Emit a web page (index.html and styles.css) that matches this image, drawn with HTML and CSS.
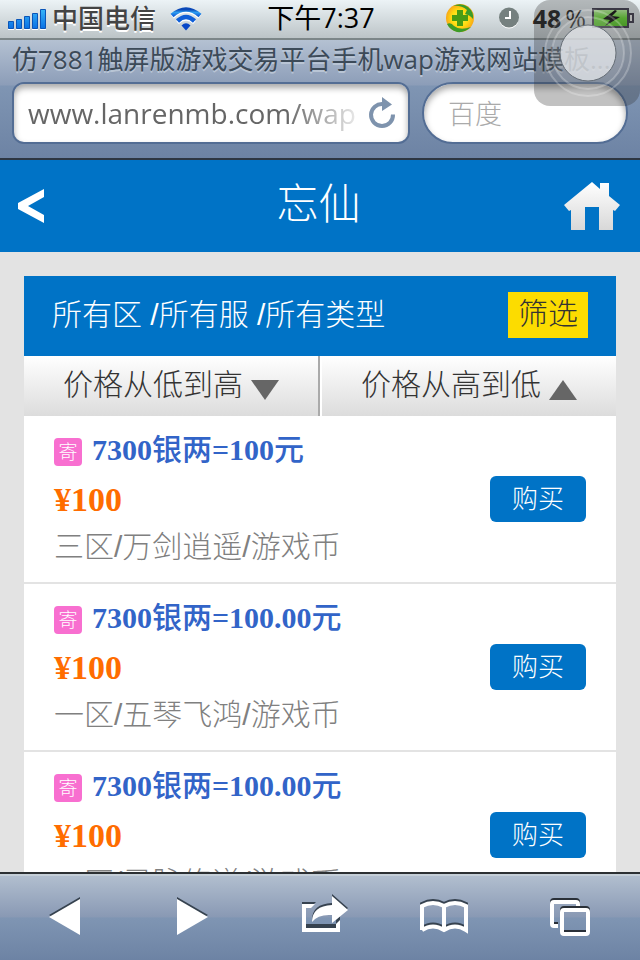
FILE: index.html
```html
<!DOCTYPE html>
<html lang="zh-CN">
<head>
<meta charset="utf-8">
<meta name="viewport" content="width=device-width">
<title>忘仙</title>
<link rel="stylesheet" href="styles.css">
</head>
<body>
<div class="chrome">
  <div class="status">
    <div class="status-side">
      <svg class="signal" width="40" height="24" viewBox="0 0 40 24" aria-hidden="true">
        <defs><linearGradient id="sig" x1="0" y1="0" x2="0" y2="1"><stop offset="0" stop-color="#36b4f8"/><stop offset="1" stop-color="#0a70e4"/></linearGradient></defs>
        <g fill="url(#sig)" stroke="#0a55b8"><path d="M.5 14.500h5v7h-5zM8.500 12.500h5v9h-5zM16.500 9.500h5v12h-5zM24.500 6.500h5v15h-5zM32.500 2.500h5v19h-5z"/></g>
        <path d="M0 22.500h6M8 22.500h6M16 22.500h6M24 22.500h6M32 22.500h6" stroke="#fff"/>
      </svg>
      <span class="carrier">中国电信</span>
      <svg class="wifi" width="32" height="26" viewBox="0 0 32 26" aria-hidden="true">
        <defs><linearGradient id="wf" x1="0" y1="0" x2="0" y2="1"><stop offset="0" stop-color="#0a48b8"/><stop offset=".5" stop-color="#2c9cf0"/><stop offset="1" stop-color="#1468dc"/></linearGradient></defs>
        <path d="M2.500 10Q16-2 29.500 10M7.500 15.500Q16 8 24.500 15.500" fill="none" stroke="#fff" stroke-width="4"/>
        <path d="M2 8.500Q16-3.500 30 8.500" fill="none" stroke="url(#wf)" stroke-width="4.500"/>
        <path d="M7.500 14Q16 6 24.500 14" fill="none" stroke="#0f5fd8" stroke-width="4.500"/>
        <path d="M11.500 18.500Q16 14 20.500 18.500L16 23.500z" fill="#0848c8"/>
      </svg>
    </div>
    <time class="clock">下午7:37</time>
    <div class="status-side status-end">
      <svg width="30" height="32" viewBox="0 0 30 32" aria-hidden="true">
        <defs><radialGradient id="orb"><stop offset="0" stop-color="#fff04a"/><stop offset=".6" stop-color="#ffdc10"/><stop offset="1" stop-color="#f8a818"/></radialGradient></defs>
        <circle cx="15" cy="16" r="14" fill="url(#orb)"/>
        <path d="M8 4Q16 0 23 5Q29 10 28 17Q25 13 20 12L22 8Q16 3 8 4z" fill="#3c9c28"/>
        <path d="M2 22Q6 20 9 24Q15 29 26 25Q20 31 12 30Q5 28 2 22z" fill="#3c9c28"/>
        <path d="M12 8h6v5h5v6h-5v5h-6v-5H7v-6h5z" fill="#4a9c14"/>
      </svg>
      <svg class="alarm" width="20" height="22" viewBox="0 0 20 22" aria-hidden="true">
        <circle cx="10" cy="12" r="9.500" fill="#fff"/><circle cx="10" cy="10.500" r="10" fill="#75807f"/>
        <path d="M11 4v7H6" fill="none" stroke="#fff" stroke-width="2"/>
      </svg>
      <span class="percent">48<span class="sign">%</span></span>
      <svg class="battery" width="42" height="22" viewBox="0 0 42 22" aria-hidden="true">
        <defs><linearGradient id="bat" x1="0" y1="0" x2="0" y2="1"><stop offset="0" stop-color="#c4f8a8"/><stop offset=".5" stop-color="#68d834"/><stop offset="1" stop-color="#50c020"/></linearGradient></defs>
        <path d="M1 2h35v18H1z" fill="url(#bat)" stroke="#3e3c4c" stroke-width="2"/>
        <path d="M37 7h4v8h-4z" fill="#e8e8e8" stroke="#3e3c4c" stroke-width="2"/>
        <path d="M23 3L11 12l7 1-5 6 15-9-8-1 5-5z" fill="#111"/>
      </svg>
    </div>
  </div>
  <div class="page-title">仿7881触屏版游戏交易平台手机wap游戏网站模板...</div>
  <form class="fields">
    <div class="address">
      <input class="url" type="text" aria-label="网址" value="www.lanrenmb.com/wap">
      <button class="reload" type="button" aria-label="刷新">
        <svg width="28" height="32" viewBox="0 0 28 32"><path d="M15 7A11 11 0 1 0 25 17.500" fill="none" stroke="#7e93ad" stroke-width="4"/><path d="M14 0L24 7.500 14 14z" fill="#7e93ad"/></svg>
      </button>
    </div>
    <input class="search" type="search" aria-label="搜索" placeholder="百度">
  </form>
  <button class="assist" type="button" aria-label="辅助触控">
    <svg width="106" height="106" viewBox="0 0 106 106">
      <g stroke="#fff" stroke-opacity=".24" stroke-width="2"><circle cx="54" cy="53" r="43" fill="#fff" fill-opacity=".04"/><circle cx="54" cy="53" r="36" fill="#fff" fill-opacity=".1"/></g>
      <circle cx="54" cy="53" r="28" fill="#e4e6ea" fill-opacity=".76" stroke="#666e76" stroke-width="1"/>
    </svg>
  </button>
</div>

<header class="header">
  <a class="back" href="#" aria-label="返回"><svg width="28" height="34" viewBox="0 0 28 34"><path d="M27 0v8L11 17l16 9v8L1 20v-6z" fill="#fff"/></svg></a>
  <h1>忘仙</h1>
  <a class="home" href="#" aria-label="首页"><svg width="56" height="48" viewBox="0 0 56 48">
    <defs><linearGradient id="hm" x1="0" y1="0" x2="0" y2="1"><stop offset="0" stop-color="#fff"/><stop offset="1" stop-color="#d8d8d8"/></linearGradient></defs>
    <path d="M28 0l8 7V1h9v13l11 9-5 6-2-1v20H35V25H21v23H7V28l-2 1-5-6z" fill="url(#hm)"/></svg></a>
</header>

<main class="content">
  <section class="panel">
    <div class="filter">
      <span>所有区 /所有服 /所有类型</span>
      <button class="filter-btn" type="button">筛选</button>
    </div>
    <div class="sorts">
      <button class="sort" type="button">价格从低到高<svg width="28" height="20" viewBox="0 0 28 20"><path d="M0 0h28L14 20z" fill="#666"/></svg></button>
      <button class="sort" type="button">价格从高到低<svg width="28" height="20" viewBox="0 0 28 20"><path d="M0 20h28L14 0z" fill="#666"/></svg></button>
    </div>
    <ul class="list">
      <li class="item">
        <div class="info">
          <h2><span class="tag">寄</span><a href="#">7300<span class="cn">银两</span>=100<span class="cn">元</span></a></h2>
          <p class="price">¥100</p>
          <p class="area">三区/万剑逍遥/游戏币</p>
        </div>
        <button class="buy" type="button">购买</button>
      </li>
      <li class="item">
        <div class="info">
          <h2><span class="tag">寄</span><a href="#">7300<span class="cn">银两</span>=100.00<span class="cn">元</span></a></h2>
          <p class="price">¥100</p>
          <p class="area">一区/五琴飞鸿/游戏币</p>
        </div>
        <button class="buy" type="button">购买</button>
      </li>
      <li class="item">
        <div class="info">
          <h2><span class="tag">寄</span><a href="#">7300<span class="cn">银两</span>=100.00<span class="cn">元</span></a></h2>
          <p class="price">¥100</p>
          <p class="area">一区/灵脉修道/游戏币</p>
        </div>
        <button class="buy" type="button">购买</button>
      </li>
    </ul>
  </section>
</main>

<nav class="toolbar">
  <button type="button" aria-label="后退"><svg width="50" height="44" viewBox="0 0 50 44"><path d="M41 2v35L10 20z" fill="#36424f"/><path d="M41 4v36L10 22z" fill="#fff"/></svg></button>
  <button type="button" aria-label="前进"><svg width="50" height="44" viewBox="-1 0 50 44"><path d="M10 2v35l31-17z" fill="#36424f"/><path d="M10 4v36l31-18z" fill="#fff"/></svg></button>
  <button type="button" aria-label="分享"><svg width="50" height="44" viewBox="-8 0 50 44">
    <g fill="#36424f"><path d="M2 7h14l-4 4H6v18h30v-4l4-4v12H2z"/><path d="M12 25Q12 9 32 8V-1l16 14-16 14v-8Q18 17 12 25z"/></g>
    <g fill="#fff" transform="translate(0 2)"><path d="M2 7h13l-4 4H6v20h30v-4l4-4v12H2z"/><path d="M12 25Q12 9 32 8V-1l16 14-16 13v-8Q18 17 12 25z"/></g></svg></button>
  <button type="button" aria-label="书签"><svg width="50" height="44" viewBox="0 0 50 44">
    <g fill="none" stroke-width="4"><path d="M3 33V9Q14 3 25 9Q36 3 47 9V33Q36 26 25 33Q14 26 3 33M25 9v24" stroke="#36424f"/><path d="M3 35V11Q14 5 25 11Q36 5 47 11V35Q36 28 25 35Q14 28 3 35M25 11v24" stroke="#fff"/></g></svg></button>
  <button type="button" aria-label="标签页"><svg width="50" height="44" viewBox="0 0 50 44">
    <g fill="none" stroke-width="4"><path d="M13 29H9q-2 0-2-2V7q0-2 2-2h22q2 0 2 2v4" stroke="#2a3038"/><path d="M13 31H9q-2 0-2-2V9q0-2 2-2h22q2 0 2 2v4" stroke="#fff"/><rect x="17" y="13" width="26" height="24" rx="2" stroke="#2a3038"/><rect x="17" y="15" width="26" height="24" rx="2" stroke="#fff"/></g></svg></button>
</nav>
</body>
</html>
```
FILE: styles.css
```css
* { box-sizing: border-box; }

body {
  margin: 0;
  height: 100vh;
  display: flex;
  flex-direction: column;
  overflow: hidden;
  background: #e3e3e3;
  color: #333;
  font-family: "Liberation Sans", "Noto Sans CJK SC", sans-serif;
  font-weight: 300;
}

button, input {
  border: 0;
  padding: 0;
  margin: 0;
  background: none;
  color: inherit;
  font: inherit;
}

svg { display: block; flex: none; overflow: visible; }
h1, h2, p, ul { margin: 0; padding: 0; font-weight: inherit; }
a { color: inherit; text-decoration: none; }

.chrome {
  position: relative;
  flex: none;
  background: linear-gradient(#b4c1d2, #8c9db8 45px, #7f95b3 46px, #6d83a4);
  background-position: 0 40px;
  background-size: 100% 118px;
  background-repeat: no-repeat;
  border-bottom: 2px solid #2d3642;
}

.status {
  display: flex;
  align-items: center;
  height: 40px;
  padding: 0 6px 2px 8px;
  background: linear-gradient(#ecf3f6, #bcc4c7);
  border-bottom: 2px solid #7c8688;
}

.status-side { flex: 1; display: flex; align-items: center; }
.status-end { justify-content: flex-end; }
.signal { margin-top: 2px; }
.wifi { margin-top: 4px; }
.carrier { margin: 0 14px 0 4px; padding-top: 2px; font-size: 26px; font-weight: 500; line-height: 36px; color: #444; text-shadow: 0 2px 0 #fff; }
.clock { font: 400 27px/36px "Open Sans", "Noto Sans CJK SC", sans-serif; color: #000; }
.alarm { margin: 0 14px 0 24px; }
.percent { display: flex; gap: 4px; margin-right: 6px; font: 700 25px/36px "Open Sans", sans-serif; color: #222; }
.sign { font-weight: 400; }

.page-title {
  padding: 0 12px;
  font: 400 26px/38px "Open Sans", "Noto Sans CJK SC", sans-serif;
  color: #3c4a58;
  text-shadow: 0 2px 0 #b9c5d5;
  white-space: nowrap;
  overflow: hidden;
}

.fields {
  display: grid;
  grid-template-columns: 398fr 206fr;
  gap: 12px;
  padding: 4px 12px 14px;
}

.address, .search {
  min-width: 0;
  height: 62px;
  border: 2px solid #536d94;
  background: #fff;
  box-shadow: inset 0 4px 6px #a8a8a8;
}

.address { display: flex; align-items: center; border-radius: 12px; padding: 0 12px 0 14px; }
.url {
  flex: 1;
  min-width: 0;
  height: 40px;
  font: 400 28px/40px "Open Sans", sans-serif;
  color: #666;
  -webkit-mask-image: linear-gradient(90deg, #000 76%, transparent);
  mask-image: linear-gradient(90deg, #000 76%, transparent);
}
.search { width: 100%; border-radius: 31px; padding: 4px 24px 0; font-size: 27px; appearance: none; }
.search::placeholder { color: #aaa; opacity: 1; }

.assist {
  position: absolute;
  top: 0;
  right: 0;
  border-radius: 16px;
  background: rgba(50, 50, 50, .3);
}

.header {
  flex: none;
  display: flex;
  align-items: center;
  justify-content: space-between;
  height: 92px;
  padding: 0 20px 0 17px;
  background: #0073c6;
  color: #fff;
}
.back, .home { width: 56px; }
h1 { font-size: 42px; line-height: 60px; padding-bottom: 2px; }

.content { flex: 1; min-height: 0; overflow: hidden; padding: 24px 24px 0; }
.panel { background: #fff; }

.filter {
  display: flex;
  align-items: center;
  justify-content: space-between;
  height: 80px;
  padding: 0 28px 2px;
  background: #0073c6;
  color: #fff;
  font-size: 30px;
  line-height: 44px;
}
.filter-btn { width: 80px; height: 46px; background: #fcdc00; color: #333; padding-bottom: 2px; }

.sorts { display: grid; grid-template-columns: 1fr 1fr; }
.sort {
  display: flex;
  align-items: center;
  justify-content: center;
  gap: 8px;
  height: 60px;
  background: linear-gradient(#fff, #dcdcdc);
  font-size: 30px;
  line-height: 58px;
  padding-bottom: 2px;
}
.sort svg { margin-top: 10px; }
.sort:first-child { border-right: 2px solid #aaa; }
.sort + .sort { border-left: 2px solid #fff; }

.list { list-style: none; }
.item {
  display: flex;
  align-items: center;
  justify-content: space-between;
  height: 168px;
  padding: 0 30px;
  border-bottom: 2px solid #e3e3e3;
}
.info { padding-bottom: 4px; }
h2 {
  display: flex;
  align-items: center;
  gap: 10px;
  font: 700 30px/48px "Liberation Serif", "Noto Sans CJK SC", serif;
  color: #3264c8;
}
.cn { font-family: "Noto Sans CJK SC", sans-serif; font-weight: 500; line-height: 40px; }
.tag {
  width: 28px;
  height: 28px;
  margin-top: 4px;
  border-radius: 4px;
  background: #f86fd0;
  color: #fff;
  font: 300 19px/25px "Noto Sans CJK SC", sans-serif;
  text-align: center;
}
.price { font: 700 34px/52px "Liberation Serif", serif; color: #ff6c00; }
.area { font-size: 30px; line-height: 42px; color: #808080; }
.buy { width: 96px; height: 46px; border-radius: 6px; background: #0073c6; color: #fff; font-size: 26px; line-height: 46px; }

.toolbar {
  flex: none;
  display: flex;
  align-items: center;
  justify-content: space-between;
  height: 88px;
  padding: 0 45px 0 39px;
  border-top: 2px solid #2c3033;
  background: linear-gradient(#b3c0d0, #8999b4 50%, #7f95b3 51%, #6d83a4);
  box-shadow: inset 0 2px 0 #c5cfd8;
}
```
